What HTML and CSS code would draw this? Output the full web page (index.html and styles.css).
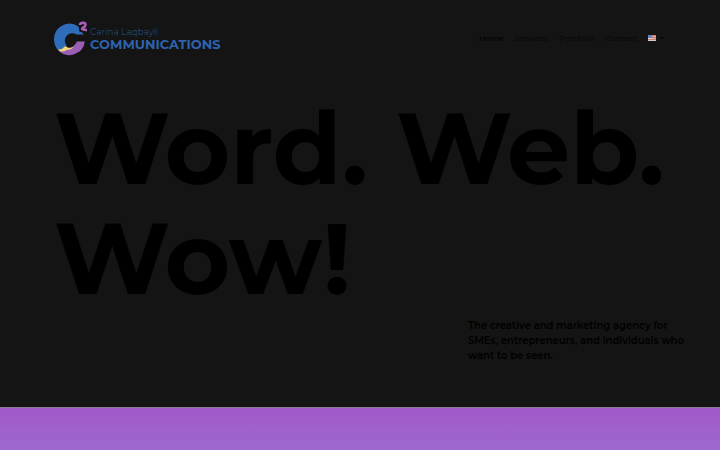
FILE: index.html
```html
<!DOCTYPE html>
<html lang="en">
<head>
    <meta charset="UTF-8">
    <meta name="viewport" content="width=device-width, initial-scale=1.0">
    <title>Carina Laqbayli Communications</title>
    <link rel="stylesheet" href="styles.css">
</head>
<body>
    <header class="site-header">
        <a href="#" class="logo">
            <svg class="logo-mark" viewBox="0 0 36 36" aria-hidden="true">
                <path d="M25.500 6.500A15.500 15.500 0 0 0 1 19.500Q1 25.500 5 30Q9 30 11 27.500L13.500 25.500A7.500 7.500 0 0 1 23.500 14.500L31 14.500Q29.500 12 26.500 11.500Z" fill="#2f6dbb"/>
                <path d="M5 30Q10 31 14 28.500Q21 28 24 21.500L31.800 21.500A15.500 15.500 0 0 1 5 30Z" fill="#9a5fb4"/>
                <path d="M5 29.500Q9.500 29.500 11 27Q13 25.500 14.500 27.500Q18 28.500 21 26.500Q18 30 14 30Q10 32 7 31.500Z" fill="#f2d87c"/>
                <path d="M27 5Q27 2.700 30 2.700Q33 2.900 32.500 5Q32 7 29.500 8Q28 9.800 34 10.200" fill="none" stroke="#a85fb8" stroke-width="2.600"/>
            </svg>
            <span class="logo-text">
                <span class="logo-name">Carina Laqbayli</span>
                <span class="logo-brand">COMMUNICATIONS</span>
            </span>
        </a>
        <nav class="menu">
            <a href="#" class="active">Home</a>
            <a href="#services">Services</a>
            <a href="#portfolio">Portfolio</a>
            <a href="#contact">Contact</a>
            <a href="#language" class="language" aria-label="Language">
                <svg class="flag" viewBox="0 0 8 6" aria-hidden="true">
                    <rect width="8" height="6" fill="#d9a49c"/>
                    <path d="M0 .5H8M0 2.500H8M0 4.500H8" stroke="#cf8374"/>
                    <path d="M0 5.500H8" stroke="#d8c5ca"/>
                    <rect width="4" height="3" fill="#6385bd"/>
                    <path d="M0 3.500H4" stroke="#d5d5e4"/>
                </svg>
                <svg class="arrow" viewBox="0 0 4 4" aria-hidden="true">
                    <path d="M0 1H4L2 3Z" fill="#000"/>
                </svg>
            </a>
        </nav>
    </header>

    <main>
        <section class="hero">
            <h1>Word. Web. Wow!</h1>
            <p>The creative and marketing agency for SMEs, entrepreneurs, and individuals who want to be seen.</p>
        </section>
        <section class="services" id="services"></section>
    </main>
</body>
</html>
```

FILE: styles.css
```css
* {
    box-sizing: border-box;
}
body {
    margin: 0;
    min-height: 100vh;
    display: flex;
    flex-direction: column;
    background-color: #141414;
    color: #000;
    font-family: Montserrat, Inter, sans-serif;
}
a {
    color: inherit;
    text-decoration: none;
}
.site-header {
    display: flex;
    justify-content: space-between;
    align-items: center;
    height: 76px;
    padding: 0 56px 0 53px;
}
.logo {
    display: flex;
    align-items: center;
    gap: 1px;
}
.logo-mark {
    width: 36px;
    height: 36px;
}
.logo-text {
    display: flex;
    flex-direction: column;
}
.logo-name {
    font-size: 9px;
    line-height: 12px;
    font-weight: 300;
    color: #2a5890;
}
.logo-brand {
    font-size: 13px;
    line-height: 12px;
    font-weight: 700;
    color: #2d62ac;
}
.menu {
    display: flex;
    align-items: center;
    gap: 11px;
    font-size: 8px;
    font-weight: 500;
    color: #080808;
}
.menu .active {
    color: #000;
}
.language {
    display: flex;
    align-items: center;
    gap: 4px;
}
.flag {
    width: 8px;
    height: 6px;
}
.arrow {
    width: 4px;
    height: 4px;
}
main {
    flex: 1;
    display: flex;
    flex-direction: column;
}
.hero {
    padding: 17px 32px 44px 54px;
}
h1 {
    margin: 0;
    font-size: 100px;
    line-height: 110px;
    font-weight: 700;
}
.hero p {
    width: 220px;
    margin: 5px 0 0 auto;
    font-size: 10px;
    line-height: 15px;
    font-weight: 600;
}
.services {
    flex: 1;
    border-top: 1px solid #8c7e92;
    background: linear-gradient(#a259c9, #9d68cd);
}
```
